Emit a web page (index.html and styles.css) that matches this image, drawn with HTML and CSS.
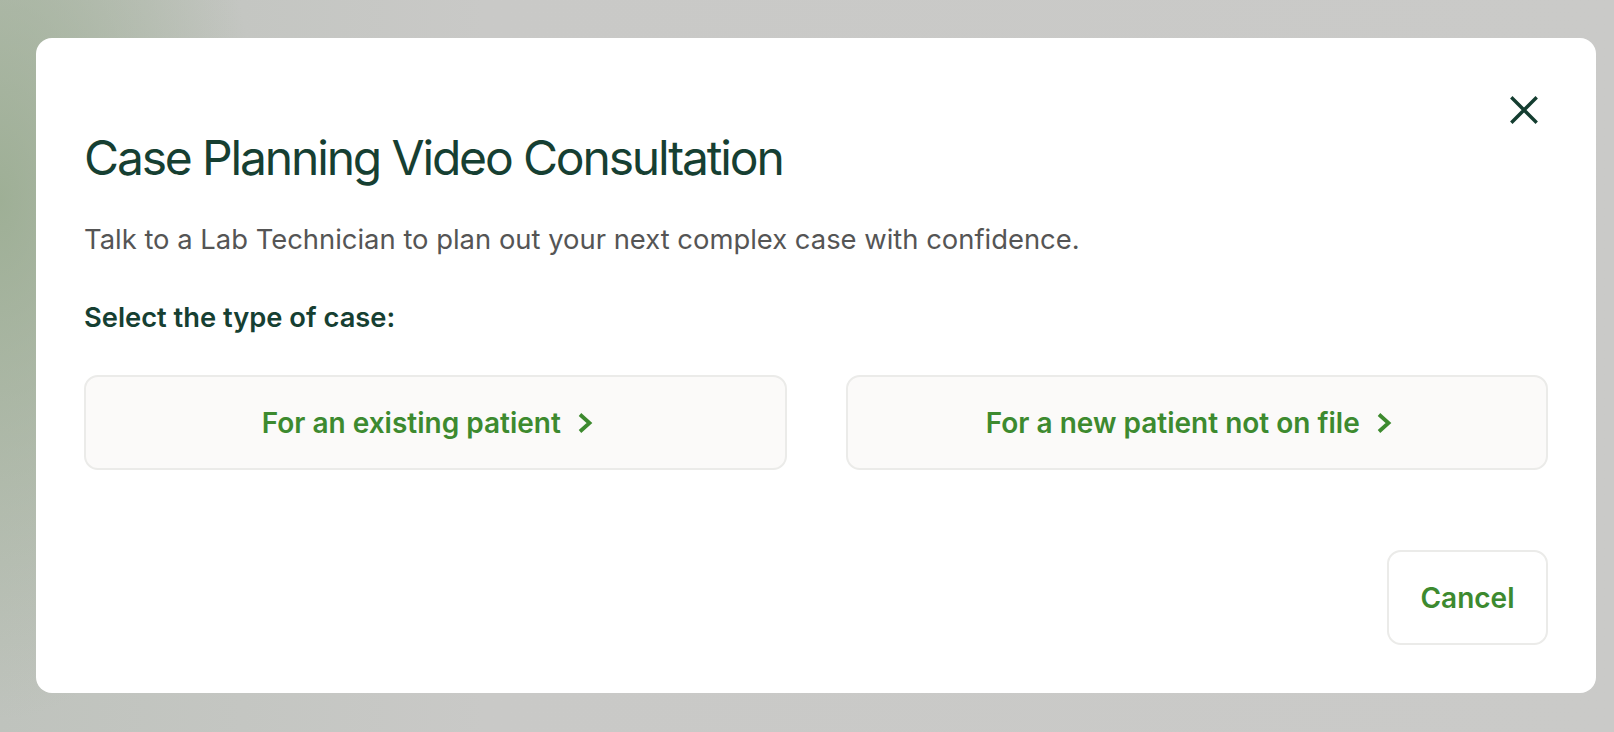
FILE: index.html
```html
<!DOCTYPE html>
<html lang="en">
<head>
<meta charset="utf-8">
<title>Case Planning Video Consultation</title>
<link rel="stylesheet" href="styles.css">
</head>
<body>
<div class="backdrop">
  <div class="modal" role="dialog" aria-labelledby="modal-title">
    <button class="close" aria-label="Close">
      <svg width="28" height="28" viewBox="0 0 28 28" fill="none" stroke="#143d30" stroke-width="3.4" stroke-linecap="square">
        <path d="M2.5 2.5 L25.5 25.5 M25.5 2.5 L2.5 25.5"/>
      </svg>
    </button>
    <h1 id="modal-title" class="title">Case Planning Video Consultation</h1>
    <p class="subtitle">Talk to a Lab Technician to plan out your next complex case with confidence.</p>
    <p class="label">Select the type of case:</p>
    <div class="options">
      <button class="option">For an existing patient
        <svg class="chev" width="32" height="22" viewBox="0 0 32 22" fill="none" stroke="#3d8a2f" stroke-width="3.8" stroke-linecap="butt" stroke-linejoin="miter">
          <path d="M3 2.5 L12.5 11 L3 19.5"/>
        </svg>
      </button>
      <button class="option">For a new patient not on file
        <svg class="chev" width="32" height="22" viewBox="0 0 32 22" fill="none" stroke="#3d8a2f" stroke-width="3.8" stroke-linecap="butt" stroke-linejoin="miter">
          <path d="M3 2.5 L12.5 11 L3 19.5"/>
        </svg>
      </button>
    </div>
    <div class="footer">
      <button class="cancel">Cancel</button>
    </div>
  </div>
</div>
</body>
</html>
```

FILE: styles.css
```css
* { box-sizing: border-box; }
html, body { margin: 0; padding: 0; height: 100%; }
body {
  font-family: Inter, "Noto Sans", sans-serif;
  background: #c9c9c7;
}
.backdrop {
  min-height: 100%;
  padding: 38px 18px 39px 36px;
  background:
    radial-gradient(ellipse 260px 520px at 0px 200px, rgba(150,170,140,0.8), rgba(150,170,140,0) 100%),
    linear-gradient(90deg, #bfc3bd 0%, #c9c9c7 30%, #cacac8 100%);
}
.modal {
  position: relative;
  background: #ffffff;
  border-radius: 16px;
  padding: 91px 48px 48px 48px;
  height: 655px;
  display: flex;
  flex-direction: column;
}
.close {
  position: absolute;
  top: 48px;
  right: 48px;
  width: 48px;
  height: 48px;
  border: 0;
  background: transparent;
  padding: 0;
  display: flex;
  align-items: center;
  justify-content: center;
  cursor: pointer;
}
.title {
  margin: 0;
  font-size: 48px;
  line-height: 58px;
  font-weight: 400;
  letter-spacing: -0.045em;
  color: #163f32;
}
.subtitle {
  margin: 32px 0 0 0;
  font-size: 27.4px;
  line-height: 40px;
  color: #555555;
}
.label {
  margin: 39px 0 0 0;
  font-size: 27.3px;
  line-height: 40px;
  font-weight: 600;
  color: #163f32;
}
.options {
  margin-top: 37px;
  display: grid;
  grid-template-columns: 1fr 1fr;
  column-gap: 59px;
}
.option {
  height: 95px;
  border: 2px solid #ebebe9;
  border-radius: 14px;
  background: #fbfaf9;
  font-family: inherit;
  font-size: 28px;
  font-weight: 600;
  color: #3d8a2f;
  display: flex;
  align-items: center;
  justify-content: center;
  gap: 16px;
  cursor: pointer;
}
.footer {
  margin-top: auto;
  display: flex;
  justify-content: flex-end;
}
.cancel {
  width: 161px;
  height: 95px;
  border: 2px solid #ebebe9;
  border-radius: 14px;
  background: #ffffff;
  font-family: inherit;
  font-size: 28px;
  font-weight: 600;
  color: #3d8a2f;
  cursor: pointer;
}
```
